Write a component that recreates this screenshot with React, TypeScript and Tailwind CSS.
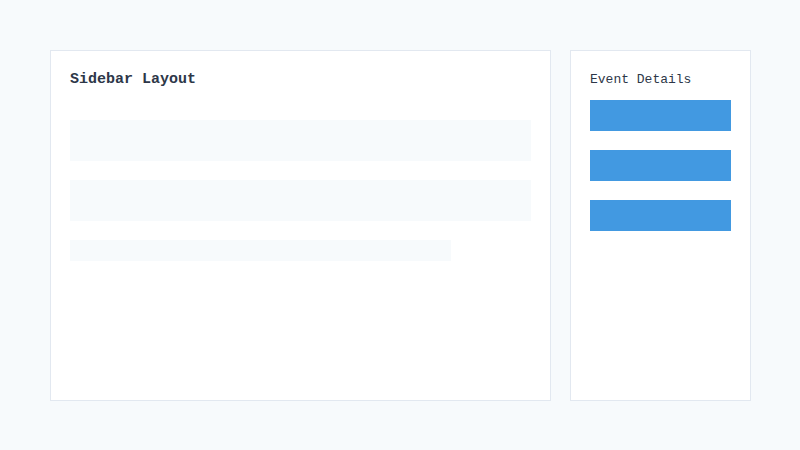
export default function App() {
  return (
    <div className="w-[800px] h-[450px] bg-[#f7fafc] p-[50px] flex gap-[19px]" style={{ fontFamily: '"Liberation Mono", "DejaVu Sans Mono", monospace' }}>
      <div className="shrink-0 w-[501px] h-[351px] bg-white border border-[#e2e8f0] px-[19px] pt-[19px] flex flex-col">
        <div className="h-[18px] flex items-center text-[15px] font-bold text-[#2d3748] leading-none">Sidebar Layout</div>
        <div className="mt-[32px] h-[41px] bg-[#f7fafc]"></div>
        <div className="mt-[19px] h-[41px] bg-[#f7fafc]"></div>
        <div className="mt-[19px] h-[21px] w-[381px] bg-[#f7fafc]"></div>
      </div>
      <div className="shrink-0 w-[181px] h-[351px] bg-white border border-[#e2e8f0] px-[19px] pt-[19px] flex flex-col">
        <div className="h-[18px] flex items-center text-[13px] text-[#2d3748] leading-none">Event Details</div>
        <div className="mt-[12px] h-[31px] bg-[#4299e1]"></div>
        <div className="mt-[19px] h-[31px] bg-[#4299e1]"></div>
        <div className="mt-[19px] h-[31px] bg-[#4299e1]"></div>
      </div>
    </div>
  );
}
